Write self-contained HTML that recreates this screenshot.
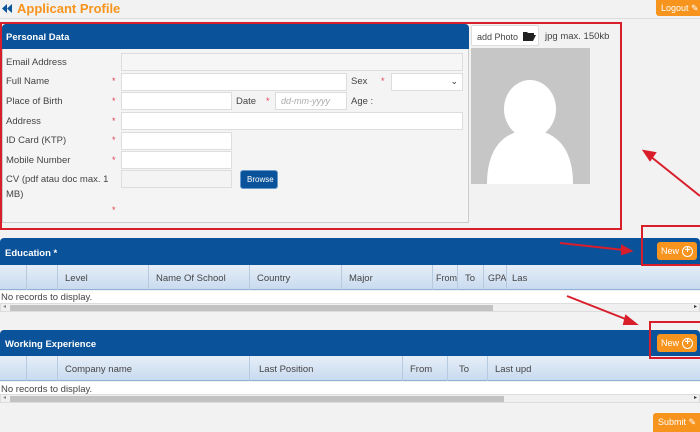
<!DOCTYPE html>
<html><head><style>
*{box-sizing:border-box;margin:0;padding:0}
body{width:700px;height:432px;overflow:hidden;background:#f2f2f2;font-family:"Liberation Sans",sans-serif;font-size:9.5px;color:#444;position:relative}
.a{position:absolute}
.in{position:absolute;background:#fff;border:1px solid #ddd;height:18px}
.lbl{position:absolute;font-size:9.5px;color:#444}
.st{position:absolute;color:#e04050;font-size:9px}
.hdr{position:absolute;background:#0a5299;color:#fff;font-weight:bold;font-size:9.5px}
.th{position:absolute;height:25px;background:linear-gradient(#e6eef8,#c9dbef);border-bottom:1px solid #8fb0d6}
.th div{position:absolute;top:0;height:25px;border-left:1px solid #b7c9de;padding:8px 0 0 7px;color:#444;white-space:nowrap}
.btn{position:absolute;background:#f7941d;color:#fff;border-radius:3px;font-size:9px;white-space:nowrap}
.nb{display:flex;align-items:center;justify-content:center;gap:3px;padding:0}
.sb{position:absolute;height:9px;background:#f0f0f0;border:1px solid #ddd}
.sb i{position:absolute;top:1px;height:6px;background:#c2c2c2}
.pl{display:inline-block;width:11px;height:11px;border:1.5px solid #fff;border-radius:50%;text-align:center;line-height:8px;font-size:10px;font-weight:bold}
</style></head><body>
<svg class="a" style="left:2px;top:4px" width="12" height="9"><polygon points="0,4.5 5,0 5,9" fill="#0a5299"/><polygon points="5,4.5 10,0 10,9" fill="#0a5299"/></svg>
<div class="a" style="left:17px;top:1px;color:#f7941d;font-size:13px;font-weight:bold">Applicant Profile</div>
<div class="a" style="left:0;top:18px;width:700px;height:1px;background:#ddd"></div>
<div class="btn" style="left:656px;top:0;width:46px;height:16px;padding:3px 0 0 5px;border-radius:0 0 0 3px">Logout ✎</div>

<div class="a" style="left:0;top:22px;width:622px;height:208px;border:2px solid #d81e2a"></div>
<div class="a" style="left:2px;top:24px;width:467px;height:199px;border:1px solid #ccc;border-radius:4px 4px 0 0;background:#f4f4f4"></div>
<div class="hdr" style="left:2px;top:24px;width:467px;height:25px;padding:8px 0 0 4px;border-radius:4px 4px 0 0">Personal Data</div>

<div class="lbl" style="left:6px;top:57px">Email Address</div>
<div class="in" style="left:121px;top:53px;width:342px;background:#f6f6f6"></div>
<div class="lbl" style="left:6px;top:76px">Full Name</div><div class="st" style="left:112px;top:76px">*</div>
<div class="in" style="left:121px;top:73px;width:226px"></div>
<div class="lbl" style="left:351px;top:76px">Sex</div><div class="st" style="left:381px;top:76px">*</div>
<div class="in" style="left:391px;top:73px;width:72px"><span style="position:absolute;right:4px;top:2px;font-size:9px;color:#333">&#8964;</span></div>
<div class="lbl" style="left:6px;top:96px">Place of Birth</div><div class="st" style="left:112px;top:96px">*</div>
<div class="in" style="left:121px;top:92px;width:111px"></div>
<div class="lbl" style="left:236px;top:96px">Date</div><div class="st" style="left:266px;top:96px">*</div>
<div class="in" style="left:275px;top:92px;width:72px;color:#aaa;font-style:italic;font-size:9px;padding:3px 0 0 5px">dd-mm-yyyy</div>
<div class="lbl" style="left:351px;top:96px">Age :</div>
<div class="lbl" style="left:6px;top:116px">Address</div><div class="st" style="left:112px;top:116px">*</div>
<div class="in" style="left:121px;top:112px;width:342px"></div>
<div class="lbl" style="left:6px;top:135px">ID Card (KTP)</div><div class="st" style="left:112px;top:135px">*</div>
<div class="in" style="left:121px;top:132px;width:111px"></div>
<div class="lbl" style="left:6px;top:155px">Mobile Number</div><div class="st" style="left:112px;top:155px">*</div>
<div class="in" style="left:121px;top:151px;width:111px"></div>
<div class="lbl" style="left:6px;top:172px;line-height:15px;width:110px">CV (pdf atau doc max. 1<br>MB)</div>
<div class="in" style="left:121px;top:170px;width:111px;background:#f4f4f4"></div>
<div class="a" style="left:240px;top:170px;width:38px;height:19px;background:#0a5299;border:1px solid #6a9acb;border-radius:3px;color:#fff;font-size:8px;padding:4px 0 0 6px">Browse</div>
<div class="st" style="left:112px;top:205px">*</div>

<div class="a" style="left:471px;top:25px;width:68px;height:21px;background:#fff;border:1px solid #ddd;border-radius:2px;padding:5px 0 0 5px;color:#444;font-size:9px;white-space:nowrap">add Photo <svg width="13" height="10" style="vertical-align:-1px;margin-left:2px"><path d="M0 1h4l1 1h6v2H3L0 10z M3 4h10l-3 6H0z" fill="#222"/></svg></div>
<div class="a" style="left:545px;top:31px;color:#444">jpg max. 150kb</div>
<div class="a" style="left:471px;top:48px;width:119px;height:136px;background:#c6c6c6;overflow:hidden">
<svg width="119" height="136"><ellipse cx="59" cy="61" rx="26" ry="29" fill="#fff"/><path d="M16 136 C16 95 38 82 59 82 C80 82 102 95 102 136 Z" fill="#fff"/></svg></div>

<div class="hdr" style="left:0;top:238px;width:700px;height:27px;padding:10px 0 0 5px;border-radius:4px 4px 0 0">Education *</div>
<div class="btn nb" style="left:657px;top:242px;width:40px;height:18px">New <span class="pl">+</span></div>
<div class="th" style="left:0;top:265px;width:700px">
<div style="left:26px"></div><div style="left:57px">Level</div><div style="left:148px">Name Of School</div><div style="left:249px">Country</div><div style="left:341px">Major</div><div style="left:432px;padding-left:0;width:25px;text-align:right;font-size:9px">From</div><div style="left:457px">To</div><div style="left:483px;padding-left:4px;font-size:9px">GPA</div><div style="left:506px;padding-left:5px">Las</div></div>
<div class="a" style="left:0;top:291px;width:700px;height:12px;background:#fff"></div>
<div class="a" style="left:1px;top:292px">No records to display.</div>
<div class="sb" style="left:0;top:303px;width:700px"><i style="left:9px;width:483px"></i><span style="position:absolute;left:2px;top:-1px;font-size:6px;color:#888">◂</span><span style="position:absolute;right:2px;top:-1px;font-size:6px;color:#333">▸</span></div>

<div class="hdr" style="left:0;top:330px;width:700px;height:26px;padding:9px 0 0 5px;border-radius:4px 4px 0 0">Working Experience</div>
<div class="btn nb" style="left:657px;top:334px;width:40px;height:18px">New <span class="pl">+</span></div>
<div class="th" style="left:0;top:356px;width:700px">
<div style="left:26px"></div><div style="left:57px">Company name</div><div style="left:249px;padding-left:9px">Last Position</div><div style="left:402px">From</div><div style="left:447px;padding-left:11px">To</div><div style="left:487px">Last upd</div></div>
<div class="a" style="left:0;top:382px;width:700px;height:12px;background:#fff"></div>
<div class="a" style="left:1px;top:384px">No records to display.</div>
<div class="sb" style="left:0;top:394px;width:700px"><i style="left:9px;width:494px"></i><span style="position:absolute;left:2px;top:-1px;font-size:6px;color:#888">◂</span><span style="position:absolute;right:2px;top:-1px;font-size:6px;color:#333">▸</span></div>

<div class="btn" style="left:653px;top:413px;width:49px;height:19px;padding:4px 0 0 5px;border-radius:3px 0 0 0">Submit ✎</div>

<svg class="a" style="left:0;top:0" width="700" height="432">
<g stroke="#d81e2a" stroke-width="2" fill="#d81e2a">
<line x1="700" y1="196" x2="650" y2="156"/><polygon points="644,151 655,153 650,160"/>
<line x1="560" y1="243" x2="624" y2="250"/><polygon points="631,251 622,246 622,254"/>
<line x1="567" y1="296" x2="628" y2="320"/><polygon points="636,324 626,316 624,324"/>
<rect x="642" y="226" width="60" height="39" fill="none"/>
<rect x="650" y="322" width="52" height="36" fill="none"/>
</g></svg>
</body></html>
